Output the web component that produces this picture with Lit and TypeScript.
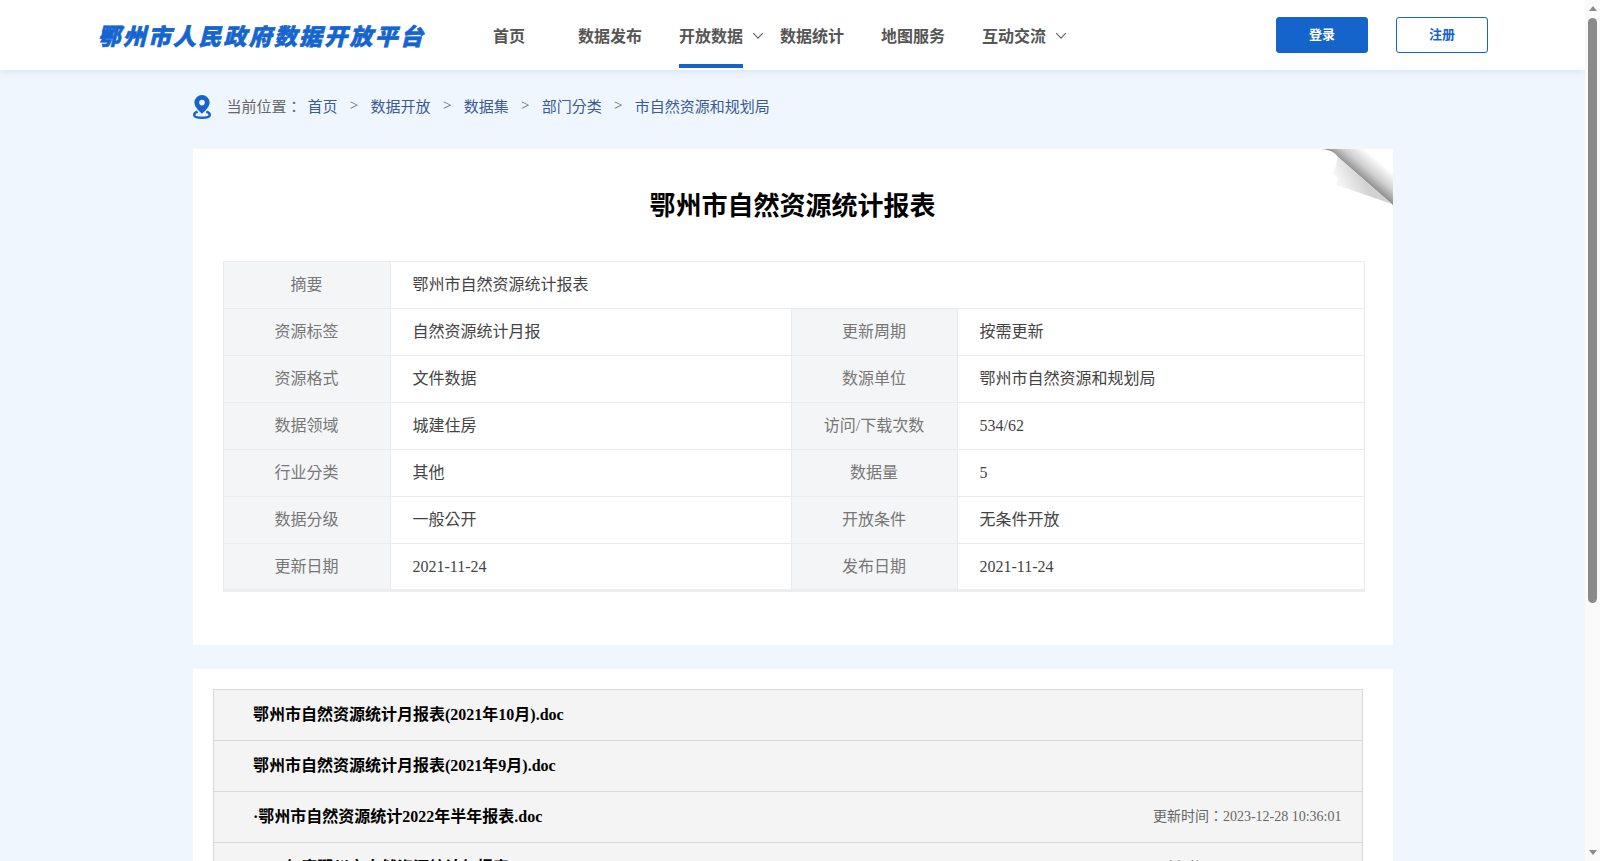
import { css, html, LitElement } from 'lit';
import { customElement } from 'lit/decorators.js';

const navItems = [
    { label: '首页' },
    { label: '数据发布' },
    { label: '开放数据', arrow: true, active: true },
    { label: '数据统计' },
    { label: '地图服务' },
    { label: '互动交流', arrow: true },
];

const crumbs = ['首页', '数据开放', '数据集', '部门分类', '市自然资源和规划局'];

const infoRows = [
    ['资源标签', '自然资源统计月报', '更新周期', '按需更新'],
    ['资源格式', '文件数据', '数源单位', '鄂州市自然资源和规划局'],
    ['数据领域', '城建住房', '访问/下载次数', '534/62'],
    ['行业分类', '其他', '数据量', '5'],
    ['数据分级', '一般公开', '开放条件', '无条件开放'],
    ['更新日期', '2021-11-24', '发布日期', '2021-11-24'],
];

const files = [
    { name: '鄂州市自然资源统计月报表(2021年10月).doc', time: '' },
    { name: '鄂州市自然资源统计月报表(2021年9月).doc', time: '' },
    { name: '·鄂州市自然资源统计2022年半年报表.doc', time: '更新时间：2023-12-28 10:36:01' },
    { name: '2021年度鄂州市自然资源统计年报表.doc', time: '更新时间：2023-12-28 10:36:01' },
];

@customElement('app-root')
export class AppRoot extends LitElement {

    static get styles() {
        return css`
      :host {
        display: flex;
        height: 100vh;
        overflow: hidden;
        font-family: "Liberation Serif", "Noto Sans CJK TC", serif;
        color: #333;
      }
      .page {
        flex: 1;
        min-width: 0;
        overflow: hidden;
        background: #eff6fe;
      }
      .scrollbar {
        display: flex;
        flex-direction: column;
        align-items: center;
        flex: none;
        width: 15px;
        padding-top: 6px;
        box-sizing: border-box;
        background: #fafafa;
      }
      .scrollbar i {
        width: 0;
        height: 0;
        border-left: 4.500px solid transparent;
        border-right: 4.500px solid transparent;
      }
      .scrollbar .up {
        border-bottom: 5px solid #8a8a8a;
      }
      .scrollbar .down {
        margin-top: auto;
        margin-bottom: 6px;
        border-top: 5px solid #8a8a8a;
      }
      .scrollbar .thumb {
        width: 9px;
        height: 585px;
        margin-top: 7px;
        border-radius: 5px;
        background: #8a8a8a;
      }
      header {
        display: flex;
        align-items: center;
        height: 70px;
        padding: 0 97px 0 100px;
        background: #fff;
        box-shadow: 0 1px 8px rgba(60, 110, 190, 0.14);
      }
      .logo {
        width: 377px;
        flex: none;
        font-family: "Noto Sans CJK SC", sans-serif;
        font-size: 23px;
        font-weight: 900;
        letter-spacing: 2.200px;
        color: #1565d0;
        -webkit-text-stroke: 0.6px #1565d0;
        white-space: nowrap;
      }
      .logo span {
        display: inline-block;
        transform: skewX(-14deg);
      }
      nav {
        display: flex;
        gap: 37px;
        height: 70px;
        flex: 1;
      }
      .nav-item {
        position: relative;
        width: 64px;
        height: 64px;
        padding-bottom: 2px;
        line-height: 73px;
        text-align: center;
        font-size: 16px;
        font-weight: 700;
        color: #555;
        white-space: nowrap;
      }
      .nav-item.active {
        height: 64px;
        padding-bottom: 0;
        border-bottom: 4px solid #1464cc;
      }
      .nav-item svg {
        position: absolute;
        top: 32px;
        left: 73px;
      }
      .btn {
        display: flex;
        align-items: center;
        justify-content: center;
        box-sizing: border-box;
        width: 92px;
        height: 36px;
        margin-left: 28px;
        padding-bottom: 4px;
        border: 1px solid #1464cc;
        border-radius: 3px;
        font-size: 13px;
        font-weight: 700;
        color: #1464cc;
      }
      .btn.primary {
        background: #1464cc;
        color: #fff;
      }
      main {
        width: 1200px;
        margin: 0 auto;
      }
      .crumbs {
        display: flex;
        align-items: center;
        height: 71px;
        padding-bottom: 8px;
        font-size: 15px;
        color: #666;
      }
      .crumbs svg {
        margin: 2px 16px 0 0;
      }
      .crumbs .here {
        margin-right: 6px;
      }
      .crumbs a {
        color: #3a5a94;
      }
      .crumbs .sep {
        margin: 0 12.300px;
        color: #555;
      }
      .card {
        position: relative;
        background: #fff;
      }
      .summary {
        height: 496px;
        box-sizing: border-box;
        padding: 0 28px 0 30px;
        margin-bottom: 24px;
      }
      .curl {
        position: absolute;
        top: 0;
        right: 0;
      }
      h1 {
        margin: 0;
        height: 112px;
        padding: 37px 2px 0 0;
        box-sizing: border-box;
        line-height: 42px;
        text-align: center;
        font-size: 26px;
        font-weight: 700;
        color: #000;
      }
      table {
        width: 1141px;
        table-layout: fixed;
        border-collapse: collapse;
        border-bottom: 3px solid #eee;
        font-size: 16px;
        line-height: 20px;
      }
      td {
        height: 47px;
        padding: 0;
        border: 1px solid #e9ebee;
        box-sizing: border-box;
      }
      td.label {
        text-align: center;
        background: #f4f5f7;
        color: #777;
      }
      td.value {
        padding-left: 22px;
        color: #444;
      }
      .files {
        height: 548px;
        box-sizing: border-box;
        padding: 20px 30px 0 20px;
      }
      .file {
        display: flex;
        align-items: center;
        justify-content: space-between;
        box-sizing: border-box;
        height: 51px;
        padding: 0 20px 1px 39.500px;
        border: 1px solid #d9d9d9;
        border-top: 0;
        background: #f4f4f4;
        line-height: 20px;
      }
      .file:first-child {
        height: 52px;
        border-top: 1px solid #d9d9d9;
      }
      .file b {
        font-size: 16px;
        color: #000;
      }
      .file span {
        font-size: 14px;
        color: #666;
      }
      `;
    }

    render() {
        return html`
      <div class="page">
        <header>
          <div class="logo"><span>鄂州市人民政府数据开放平台</span></div>
          <nav>
            ${navItems.map(item => html`
              <div class="nav-item ${item.active ? 'active' : ''}">
                ${item.label}
                ${item.arrow ? html`
                  <svg width="12" height="8" viewBox="0 0 12 8"><path d="M1.2 1.2L6 6.2l4.8-5" fill="none" stroke="#666" stroke-width="1.2"/></svg>
                ` : ''}
              </div>
            `)}
          </nav>
          <div class="btn primary">登录</div>
          <div class="btn">注册</div>
        </header>
        <main>
          <div class="crumbs">
            <svg width="18" height="24" viewBox="0 0 18 24">
              <path fill-rule="evenodd" fill="#1464cc" d="M9 0a7.6 7.6 0 0 1 7.6 7.6c0 3.6-3.3 7.6-7.6 11.2C4.7 15.2 1.4 11.2 1.4 7.6A7.6 7.6 0 0 1 9 0zm0 4.800a2.800 2.800 0 1 0 0 5.600 2.800 2.800 0 0 0 0-5.600z"/>
              <path fill="none" stroke="#1464cc" stroke-width="2.400" d="M4.6 16.6C2.4 17.4 1.200 18.6 1.200 19.9 1.200 21.9 4.600 22.800 9 22.800s7.800-.9 7.800-2.900c0-1.300-1.200-2.500-3.400-3.300"/>
            </svg>
            <span class="here">当前位置：</span>
            ${crumbs.map((crumb, i) => html`
              ${i > 0 ? html`<span class="sep">&gt;</span>` : ''}
              <a>${crumb}</a>
            `)}
          </div>
          <section class="card summary">
            <svg class="curl" width="72" height="56" viewBox="-2 0 72 56">
              <defs>
                <linearGradient id="back" gradientUnits="userSpaceOnUse" x1="41" y1="32" x2="57" y2="13">
                  <stop offset="0" stop-color="#8a8a8a"/>
                  <stop offset="0.45" stop-color="#cfcfcf"/>
                  <stop offset="1" stop-color="#fff"/>
                </linearGradient>
                <linearGradient id="fold" gradientUnits="userSpaceOnUse" x1="20" y1="40" x2="40" y2="30">
                  <stop offset="0" stop-color="#f5f5f5"/>
                  <stop offset="1" stop-color="#d2d2d2"/>
                </linearGradient>
              </defs>
              <path fill="url(#back)" d="M-2 0C6 .5 12 3 15 8L70 56V0z"/>
              <path fill="url(#fold)" d="M15 8C13 12 14 17 10 24L15 29 13.600 36 69 55z"/>
            </svg>
            <h1>鄂州市自然资源统计报表</h1>
            <table>
              <colgroup>
                <col style="width:167px"><col style="width:401px"><col style="width:166px"><col style="width:407px">
              </colgroup>
              <tr>
                <td class="label">摘要</td>
                <td class="value" colspan="3">鄂州市自然资源统计报表</td>
              </tr>
              ${infoRows.map(row => html`
                <tr>
                  <td class="label">${row[0]}</td>
                  <td class="value">${row[1]}</td>
                  <td class="label">${row[2]}</td>
                  <td class="value">${row[3]}</td>
                </tr>
              `)}
            </table>
          </section>
          <section class="card files">
            ${files.map(file => html`
              <div class="file">
                <b>${file.name}</b>
                <span>${file.time}</span>
              </div>
            `)}
          </section>
        </main>
      </div>
      <div class="scrollbar">
        <i class="up"></i>
        <div class="thumb"></div>
        <i class="down"></i>
      </div>
    `;
    }
}
